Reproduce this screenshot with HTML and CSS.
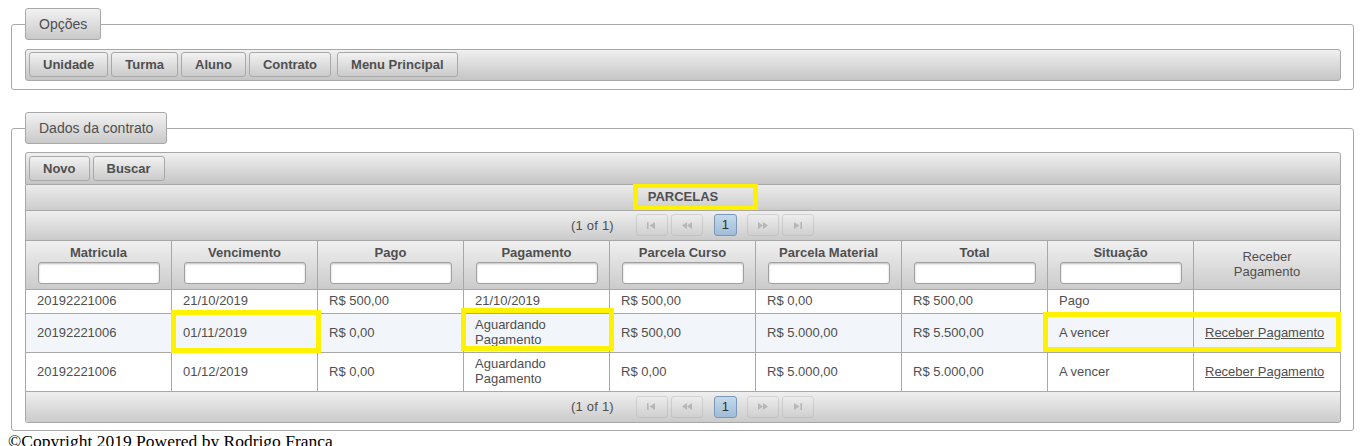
FILE: index.html
```html
<!DOCTYPE html>
<html lang="pt">
<head>
<meta charset="utf-8">
<title>Parcelas</title>
<link rel="stylesheet" href="styles.css">
</head>
<body>
<fieldset class="panel">
  <legend class="panel-legend">Opções</legend>
  <div class="toolbar">
    <button class="btn">Unidade</button>
    <button class="btn">Turma</button>
    <button class="btn">Aluno</button>
    <button class="btn">Contrato</button>
    <button class="btn btn-sep">Menu Principal</button>
  </div>
</fieldset>

<fieldset class="panel panel-data">
  <legend class="panel-legend">Dados da contrato</legend>
  <div class="toolbar toolbar-top">
    <button class="btn">Novo</button>
    <button class="btn">Buscar</button>
  </div>
  <div class="datatable">
    <div class="dt-header">PARCELAS</div>
    <div class="paginator">
      <span class="pg-report">(1 of 1)</span>
      <span class="pg-btn disabled"><svg width="9" height="7" viewBox="0 0 9 7"><rect x="0" y="0" width="1.6" height="7"/><polygon points="8,0 2.5,3.5 8,7"/></svg></span>
      <span class="pg-btn disabled"><svg width="10" height="7" viewBox="0 0 10 7"><polygon points="5,0 0,3.5 5,7"/><polygon points="10,0 5,3.5 10,7"/></svg></span>
      <span class="pg-page">1</span>
      <span class="pg-btn disabled pg-next"><svg width="10" height="7" viewBox="0 0 10 7"><polygon points="0,0 5,3.5 0,7"/><polygon points="5,0 10,3.5 5,7"/></svg></span>
      <span class="pg-btn disabled"><svg width="9" height="7" viewBox="0 0 9 7"><polygon points="1,0 6.5,3.5 1,7"/><rect x="7.4" y="0" width="1.6" height="7"/></svg></span>
    </div>
    <table class="grid">
      <thead>
        <tr>
          <th>Matricula<input class="filter" type="text"></th>
          <th>Vencimento<input class="filter" type="text"></th>
          <th>Pago<input class="filter" type="text"></th>
          <th>Pagamento<input class="filter" type="text"></th>
          <th>Parcela Curso<input class="filter" type="text"></th>
          <th>Parcela Material<input class="filter" type="text"></th>
          <th>Total<input class="filter" type="text"></th>
          <th>Situação<input class="filter" type="text"></th>
          <th class="th-plain">Receber<br>Pagamento</th>
        </tr>
      </thead>
      <tbody>
        <tr>
          <td>20192221006</td>
          <td>21/10/2019</td>
          <td>R$ 500,00</td>
          <td>21/10/2019</td>
          <td>R$ 500,00</td>
          <td>R$ 0,00</td>
          <td>R$ 500,00</td>
          <td>Pago</td>
          <td></td>
        </tr>
        <tr class="odd">
          <td>20192221006</td>
          <td>01/11/2019</td>
          <td>R$ 0,00</td>
          <td>Aguardando Pagamento</td>
          <td>R$ 500,00</td>
          <td>R$ 5.000,00</td>
          <td>R$ 5.500,00</td>
          <td>A vencer</td>
          <td><a href="#">Receber Pagamento</a></td>
        </tr>
        <tr>
          <td>20192221006</td>
          <td>01/12/2019</td>
          <td>R$ 0,00</td>
          <td>Aguardando Pagamento</td>
          <td>R$ 0,00</td>
          <td>R$ 5.000,00</td>
          <td>R$ 5.000,00</td>
          <td>A vencer</td>
          <td><a href="#">Receber Pagamento</a></td>
        </tr>
      </tbody>
    </table>
    <div class="paginator paginator-bottom">
      <span class="pg-report">(1 of 1)</span>
      <span class="pg-btn disabled"><svg width="9" height="7" viewBox="0 0 9 7"><rect x="0" y="0" width="1.6" height="7"/><polygon points="8,0 2.5,3.5 8,7"/></svg></span>
      <span class="pg-btn disabled"><svg width="10" height="7" viewBox="0 0 10 7"><polygon points="5,0 0,3.5 5,7"/><polygon points="10,0 5,3.5 10,7"/></svg></span>
      <span class="pg-page">1</span>
      <span class="pg-btn disabled pg-next"><svg width="10" height="7" viewBox="0 0 10 7"><polygon points="0,0 5,3.5 0,7"/><polygon points="5,0 10,3.5 5,7"/></svg></span>
      <span class="pg-btn disabled"><svg width="9" height="7" viewBox="0 0 9 7"><polygon points="1,0 6.5,3.5 1,7"/><rect x="7.4" y="0" width="1.6" height="7"/></svg></span>
    </div>

    <div class="mark mark-title"></div>
    <div class="mark mark-venc"></div>
    <div class="mark mark-pag"></div>
    <div class="mark mark-sit"></div>
  </div>
</fieldset>
<div class="footer">©Copyright 2019 Powered by Rodrigo Franca</div>
</body>
</html>
```

FILE: styles.css
```css
* {
  box-sizing: border-box;
}

body {
  margin: 8px;
  font-family: "Liberation Sans", Arial, sans-serif;
  font-size: 13px;
  color: #4f4f4f;
}

.panel {
  display: block;
  min-width: 0;
  margin: 0 2px 0 3px;
  padding: 9px 12px 8px 13px;
  border: 1px solid #a8a8a8;
  border-radius: 3px;
}

.panel-data {
  margin-top: 22px;
  padding-top: 8px;
  padding-bottom: 7px;
}

.panel-legend {
  height: 32px;
  margin: 0;
  padding: 0 13px;
  font-size: 14px;
  line-height: 30px;
  color: #4f4f4f;
  border: 1px solid #a8a8a8;
  border-radius: 3px;
  background: linear-gradient(#f2f2f2, #c9c9c9);
}

.toolbar {
  display: flex;
  align-items: flex-start;
  gap: 3px;
  height: 32px;
  padding: 2px 3px 0;
  border: 1px solid #a8a8a8;
  border-radius: 3px;
  background: linear-gradient(#f0f0f0, #c5c5c5);
}

.toolbar-top {
  height: 33px;
  padding-top: 3px;
  border-radius: 3px 3px 0 0;
}

.btn {
  height: 25px;
  padding: 0 13px;
  font-family: "Liberation Sans", Arial, sans-serif;
  font-size: 13px;
  font-weight: bold;
  color: #4f4f4f;
  border: 1px solid #a8a8a8;
  border-radius: 3px;
  background: linear-gradient(#f2f2f2, #cbcbcb);
}

.btn-sep {
  margin-left: 3px;
}

.datatable {
  position: relative;
  border: 1px solid #a8a8a8;
  border-top: none;
  border-radius: 0 0 3px 3px;
}

.dt-header {
  height: 26px;
  line-height: 24px;
  text-align: center;
  font-weight: bold;
  color: #4f4f4f;
  border-bottom: 1px solid #a8a8a8;
  background: linear-gradient(#ececec, #cccccc);
}

.paginator {
  display: flex;
  align-items: center;
  justify-content: center;
  height: 30px;
  padding-left: 22px;
  padding-bottom: 1px;
  border-bottom: 1px solid #a8a8a8;
  background: linear-gradient(#efefef, #cbcbcb);
}

.paginator-bottom {
  height: 30px;
  border-bottom: none;
  border-radius: 0 0 3px 3px;
}

.pg-report {
  margin-right: 22px;
  color: #4f4f4f;
  letter-spacing: 0.2px;
}

.pg-btn {
  display: flex;
  align-items: center;
  justify-content: center;
  width: 32px;
  height: 22px;
  margin-right: 3px;
  border: 1px solid #a8a8a8;
  border-radius: 3px;
  background: linear-gradient(#f2f2f2, #cfcfcf);
  fill: #707070;
}

.pg-btn.disabled {
  opacity: 0.35;
}

.pg-page {
  width: 23px;
  height: 22px;
  margin: 0 10px 0 8px;
  line-height: 20px;
  text-align: center;
  color: #2f2f2f;
  border: 1px solid #7b99b7;
  border-radius: 3px;
  background: linear-gradient(#c5d9eb, #9fbdd8);
}

.grid {
  width: 100%;
  table-layout: fixed;
  border-collapse: separate;
  border-spacing: 0;
}

.grid th {
  height: 48px;
  padding: 4px 4px 5px;
  font-weight: bold;
  line-height: 15px;
  color: #4f4f4f;
  text-align: center;
  vertical-align: top;
  border-right: 1px solid #a8a8a8;
  border-bottom: 1px solid #a8a8a8;
  background: linear-gradient(#f0f0f0, #cbcbcb);
}

.grid th.th-plain {
  font-weight: normal;
  vertical-align: middle;
  padding-top: 2px;
}

.grid th:last-child,
.grid td:last-child {
  border-right: none;
}

.filter {
  display: block;
  width: 122px;
  height: 22px;
  margin: 2px auto 0;
  padding: 0 4px;
  font: 13px "Liberation Sans", Arial, sans-serif;
  border: 1px solid #a0a0a0;
  border-radius: 3px;
  background: #fff;
  box-shadow: inset 0 1px 2px rgba(0, 0, 0, 0.25);
}

.grid td {
  padding: 3px 11px 5px;
  line-height: 15px;
  color: #4f4f4f;
  vertical-align: middle;
  border-right: 1px solid #a8a8a8;
  border-bottom: 1px solid #a8a8a8;
  background: #fff;
}

.grid tr.odd td {
  background: #f2f5f9;
}

.grid a {
  color: #4f4f4f;
  text-decoration: underline;
}

.mark {
  position: absolute;
  border: 5px solid #fff200;
  pointer-events: none;
}

.mark-title {
  left: 607px;
  top: -1px;
  width: 125px;
  height: 26px;
  border-width: 4px 5px 4px 5px;
}

.mark-venc {
  left: 145px;
  top: 125px;
  width: 150px;
  height: 43px;
}

.mark-pag {
  left: 435px;
  top: 123px;
  width: 153px;
  height: 43px;
}

.mark-sit {
  left: 1017px;
  top: 127px;
  width: 298px;
  height: 40px;
}

.footer {
  font-family: "Liberation Serif", "Times New Roman", serif;
  font-size: 17.5px;
  line-height: 20px;
  color: #000;
}
```
